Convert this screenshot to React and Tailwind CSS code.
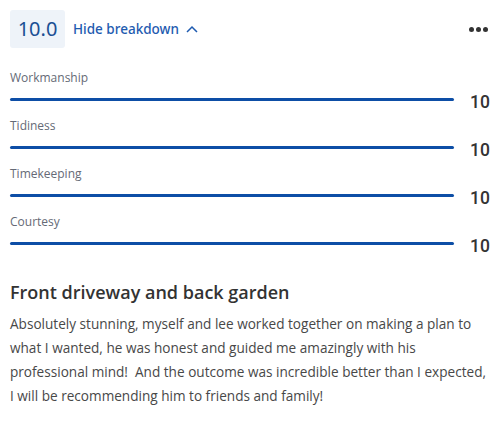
import React from "react";

const ratings = [
  { label: "Workmanship", score: 10 },
  { label: "Tidiness", score: 10 },
  { label: "Timekeeping", score: 10 },
  { label: "Courtesy", score: 10 },
];

const App = () => {
  return (
    <div className="w-[500px] h-[422px] bg-white px-[10px] pt-[10px] font-['Open_Sans',sans-serif]">
      <div className="flex items-center justify-between">
        <div className="flex items-center">
          <div className="w-[55px] h-[38px] rounded-[3px] bg-[#eef3f9] flex items-center justify-center text-[20px] text-[#1b4f94] font-['Noto_Sans',sans-serif]">
            10.0
          </div>
          <button className="ml-[8px] flex items-center text-[13.5px] font-medium text-[#1e5bb0] font-['Noto_Sans',sans-serif]">
            Hide breakdown
            <svg width="12" height="8" viewBox="0 0 12 8" className="ml-[7px]">
              <path d="M1 7 L6 2 L11 7" fill="none" stroke="#1e5bb0" strokeWidth="1.5" />
            </svg>
          </button>
        </div>
        <div className="flex gap-[2px] mr-[2px]">
          <span className="w-[5px] h-[5px] rounded-full bg-[#333]"></span>
          <span className="w-[5px] h-[5px] rounded-full bg-[#333]"></span>
          <span className="w-[5px] h-[5px] rounded-full bg-[#333]"></span>
        </div>
      </div>

      <div className="mt-[22px]">
        {ratings.map((r) => (
          <div key={r.label} className="h-[48px]">
            <div className="text-[12px] text-[#656a76] leading-[16px]">{r.label}</div>
            <div className="flex items-center">
              <div className="flex-1 h-[3px] rounded-full bg-[#0d4ea6]"></div>
              <div className="w-[36px] text-right text-[17.5px] font-medium text-[#333] font-['Roboto',sans-serif] leading-[22px] mt-[5px]">
                {r.score}
              </div>
            </div>
          </div>
        ))}
      </div>

      <h2 className="mt-[17px] text-[18px] font-semibold text-[#333] leading-[26px]">
        Front driveway and back garden
      </h2>
      <p className="mt-[7px] text-[13.6px] text-[#484848] leading-[24px]">
        Absolutely stunning, myself and lee worked together on making a plan to
        what I wanted, he was honest and guided me amazingly with his
        professional mind!&nbsp; And the outcome was incredible better than I
        expected, I will be recommending him to friends and family!
      </p>
    </div>
  );
};

export default App;
